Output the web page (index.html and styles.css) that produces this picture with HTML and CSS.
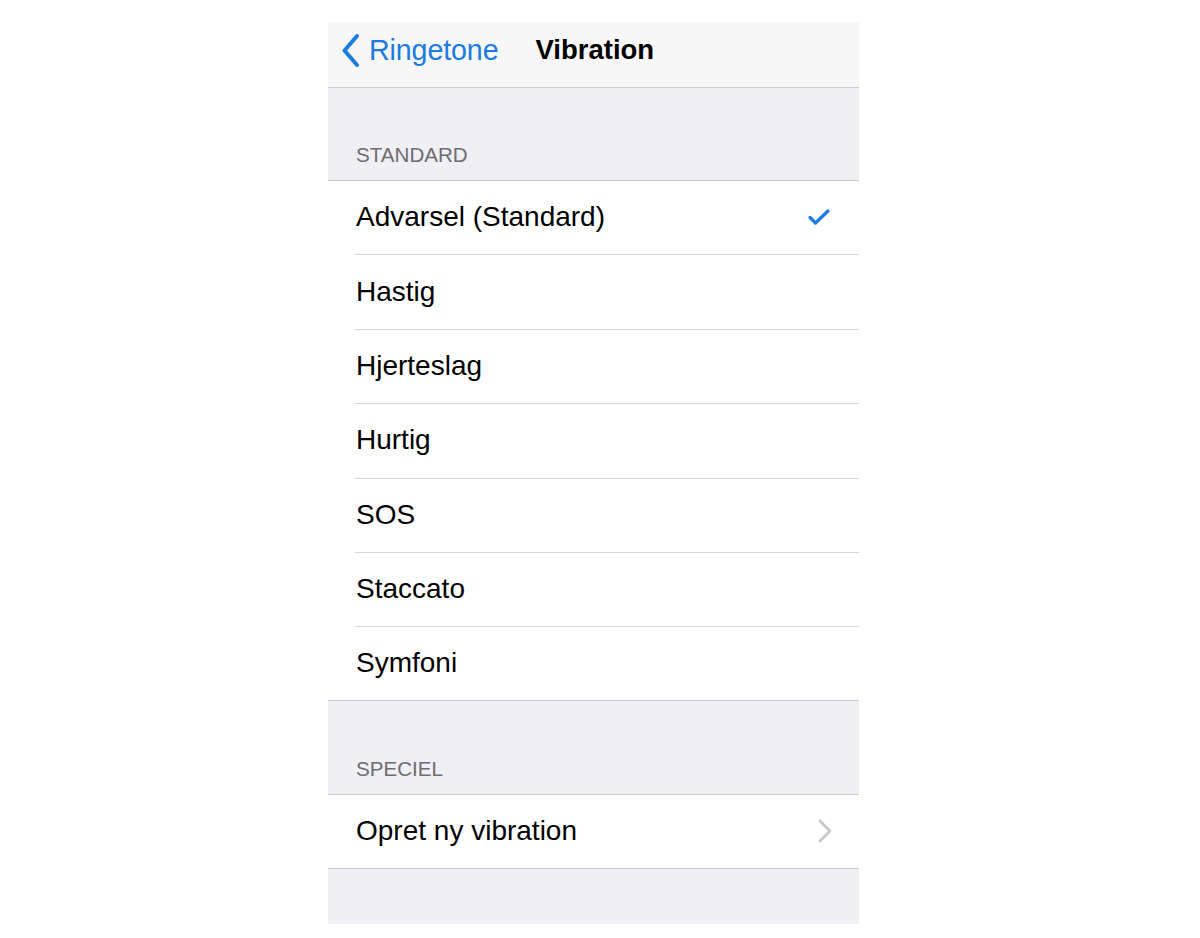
FILE: index.html
```html
<!DOCTYPE html>
<html>
<head>
<meta charset="utf-8">
<link rel="stylesheet" href="styles.css">
</head>
<body>
<div class="screen">
  <header class="nav">
    <div class="back">
      <svg class="back-icon" width="22" height="36" viewBox="0 0 22 36"><path d="M16 3 L3.5 17.5 L16 32" fill="none" stroke="#1a7be0" stroke-width="4" stroke-linecap="round" stroke-linejoin="round"/></svg>
      <span class="back-label">Ringetone</span>
    </div>
    <div class="title">Vibration</div>
  </header>

  <div class="section-head tall">STANDARD</div>
  <ul class="group">
    <li class="row"><span>Advarsel (Standard)</span>
      <svg class="check" width="24" height="18" viewBox="0 0 24 18"><path d="M3 9.5 L8.5 15 L21 3" fill="none" stroke="#1a7be0" stroke-width="3.2" stroke-linecap="round" stroke-linejoin="round"/></svg>
    </li>
    <li class="row"><span>Hastig</span></li>
    <li class="row"><span>Hjerteslag</span></li>
    <li class="row"><span>Hurtig</span></li>
    <li class="row"><span>SOS</span></li>
    <li class="row"><span>Staccato</span></li>
    <li class="row last"><span>Symfoni</span></li>
  </ul>

  <div class="section-head tall2">SPECIEL</div>
  <ul class="group">
    <li class="row last"><span>Opret ny vibration</span>
      <svg class="chev" width="16" height="24" viewBox="0 0 16 24"><path d="M3 2 L13 12 L3 22" fill="none" stroke="#c4c4c9" stroke-width="2.6" stroke-linecap="round" stroke-linejoin="round"/></svg>
    </li>
  </ul>
  <div class="footer"></div>
</div>
</body>
</html>
```
FILE: styles.css
```css
* { box-sizing: border-box; }
html, body { margin: 0; padding: 0; background: #ffffff; }
body { font-family: "Liberation Sans", Arial, sans-serif; }

.screen {
  width: 531px;
  margin: 22px 0 0 328px;
  background: #efeff4;
}

.nav {
  height: 66px;
  background: #f7f7f7;
  border-bottom: 1px solid #c9c9ce;
  display: flex;
  align-items: center;
  padding-left: 13px;
  padding-bottom: 9px;
}
.back {
  display: flex;
  align-items: center;
  color: #1a7be0;
}
.back-icon { margin-right: 6px; margin-top: 1px; }
.back-label { font-size: 28.6px; letter-spacing: -0.1px; }
.title {
  margin-left: 37px;
  font-size: 27.5px;
  font-weight: bold;
  color: #000;
}

.section-head {
  display: flex;
  align-items: flex-end;
  padding-left: 28px;
  font-size: 20.6px;
  color: #6d6d72;
  border-bottom: 1px solid #c9c9ce;
}
.section-head.tall { height: 93px; padding-bottom: 13px; }
.section-head.tall2 { height: 94px; padding-bottom: 13px; }

.group {
  list-style: none;
  margin: 0;
  padding: 0 0 0 27px;
  background: #ffffff;
  border-bottom: 1px solid #c9c9ce;
}
.row {
  height: 74.4px;
  display: flex;
  align-items: center;
  justify-content: space-between;
  padding-right: 26px;
  padding-bottom: 1px;
  font-size: 28px;
  color: #000;
  border-bottom: 1px solid #d8d8dc;
}
.row span { margin-left: 1px; }
.row.last { border-bottom: none; height: 73px; }
.check { margin-right: 2px; }
.chev { margin-right: 0; }

.footer { height: 55px; }
```
